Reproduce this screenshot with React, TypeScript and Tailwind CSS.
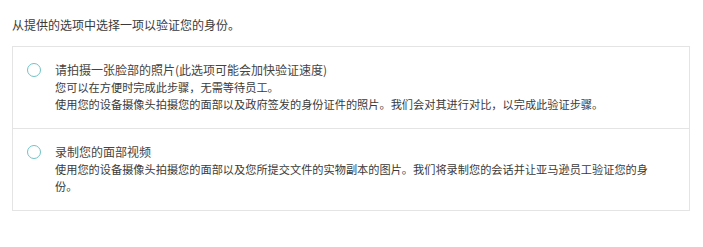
const options = [
  {
    title: "请拍摄一张脸部的照片(此选项可能会加快验证速度)",
    lines: [
      "您可以在方便时完成此步骤，无需等待员工。",
      "使用您的设备摄像头拍摄您的面部以及政府签发的身份证件的照片。我们会对其进行对比，以完成此验证步骤。",
    ],
  },
  {
    title: "录制您的面部视频",
    lines: [
      "使用您的设备摄像头拍摄您的面部以及您所提交文件的实物副本的图片。我们将录制您的会话并让亚马逊员工验证您的身份。",
    ],
  },
];

export default function App() {
  return (
    <div
      className="w-[703px] h-[247px] bg-white px-3 pt-[17px] text-[#3a3a3a]"
      style={{ fontFamily: '"Noto Sans CJK SC", "Noto Sans", sans-serif' }}
    >
      {/* Prompt */}
      <p className="text-[12px] leading-4">从提供的选项中选择一项以验证您的身份。</p>

      {/* Option list */}
      <div className="mt-[13px] w-[678px] border border-[#e4e4e4] divide-y divide-[#e4e4e4]">
        {options.map((opt) => (
          <label
            key={opt.title}
            className="flex items-start gap-[14px] pl-[14px] pt-[14px] pb-[15px] cursor-pointer"
          >
            <span className="mt-[2px] h-[14px] w-[14px] shrink-0 rounded-full border-[1.5px] border-[#6fc3c6]" />
            <div className="max-w-[600px]">
              <div className="text-[12px] leading-[18px] text-[#444]">{opt.title}</div>
              {opt.lines.map((line) => (
                <div key={line} className="text-[11.2px] leading-[17px] text-[#3a3a3a]">
                  {line}
                </div>
              ))}
            </div>
          </label>
        ))}
      </div>
    </div>
  );
}
